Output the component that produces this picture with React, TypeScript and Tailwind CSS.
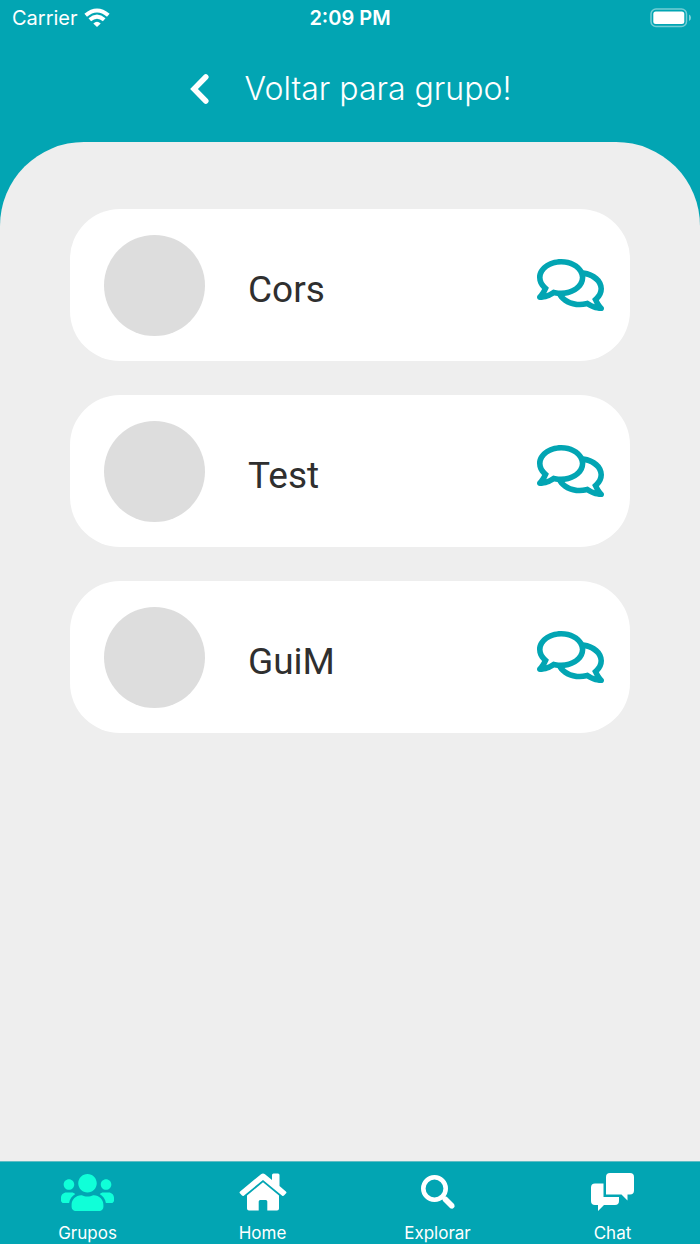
import { FaRegComments, FaUsers } from 'react-icons/fa'

interface Member {
  id: number
  name: string
}

const MEMBERS: Member[] = [
  { id: 1, name: 'Cors' },
  { id: 2, name: 'Test' },
  { id: 3, name: 'GuiM' },
]

const TABS = [
  { label: 'Grupos', icon: <FaUsers className="h-[43px] w-[53px]" />, active: true },
  { label: 'Home', icon: <HomeIcon />, active: false },
  { label: 'Explorar', icon: <SearchIcon />, active: false },
  { label: 'Chat', icon: <ChatIcon />, active: false },
]

function HomeIcon() {
  return (
    <svg viewBox="0 0 48 38" className="h-[38px] w-12" fill="currentColor" aria-hidden="true">
      <path d="M22 1.200Q24-.4 26 1.200L33 7V2Q33 .5 34.500 .5H39Q40.500 .5 40.500 2V13L46.900 18.400Q47.900 19.300 47.100 20.200L45 22.600Q44.100 23.400 43.200 22.700L24 7 4.800 22.700Q3.900 23.400 3 22.600L.9 20.200Q.1 19.300 1.100 18.400Z" />
      <path d="M24 9.300 40 22.400V35.500Q40 37.500 38 37.500H28.300V28.500Q28.300 27 26.800 27H21.200Q19.700 27 19.700 28.500V37.500H10Q8 37.500 8 35.500V22.400Z" />
    </svg>
  )
}

function SearchIcon() {
  return (
    <svg viewBox="0 0 34 34" className="h-[34px] w-[34px]" fill="none" stroke="currentColor" aria-hidden="true">
      <circle cx="13.500" cy="13.500" r="11.200" strokeWidth="4.600" />
      <path d="M20.500 20.500 25 25" strokeWidth="4.500" />
      <path d="M23.500 23.500 31.500 31.500" strokeWidth="5.500" />
      <path d="M24.500 24.500 31 31" strokeWidth="5" strokeLinecap="round" />
    </svg>
  )
}

function ChatIcon() {
  return (
    <svg viewBox="0 0 43 38" className="h-[38px] w-[43px]" fill="currentColor" aria-hidden="true">
      <path d="M19 0H39Q43 0 43 4V17.500Q43 21.500 39 21.500H36.500V27.500L30.500 21.500H15V4Q15 0 19 0Z" />
      <path d="M4 10.500H12.500V24H28V28Q28 32 24 32H13L7 38V32H4Q0 32 0 28V14.500Q0 10.500 4 10.500Z" />
    </svg>
  )
}

function WifiIcon() {
  return (
    <svg viewBox="0 0 26 20" className="h-5 w-[26px]" fill="none" stroke="currentColor" strokeWidth="4" role="img" aria-label="Wi-Fi">
      <path d="M1.700 7.300Q13-2.300 24.300 7.300" />
      <path d="M5.800 11.700Q13 5.600 20.200 11.700" />
      <path d="M13 19 9.300 15.400Q13 12.100 16.700 15.400Z" fill="currentColor" stroke="none" />
    </svg>
  )
}

function BatteryIcon() {
  return (
    <svg viewBox="0 0 42 20" className="h-5 w-[42px]" role="img" aria-label="Battery full">
      <rect x="1" y="1" width="35.500" height="17.500" rx="5" fill="none" stroke="white" strokeOpacity=".45" strokeWidth="1.500" />
      <rect x="3.300" y="3.500" width="31" height="12.500" rx="2.500" fill="white" />
      <path d="M39 6.500Q41 7.500 41 9.700T39 13Z" fill="white" fillOpacity=".5" />
    </svg>
  )
}

function StatusBar() {
  return (
    <div className="grid h-9 grid-cols-3 items-center px-2 text-xl">
      <div className="flex items-center gap-1.5 pl-1">
        <span>Carrier</span>
        <WifiIcon />
      </div>
      <span className="text-center font-semibold">2:09 PM</span>
      <div className="flex justify-end">
        <BatteryIcon />
      </div>
    </div>
  )
}

function MemberCard({ name }: { name: string }) {
  return (
    <li className="flex h-[152px] items-center rounded-[50px] bg-white pl-[34px] pr-[26px]">
      <div className="h-[101px] w-[101px] shrink-0 rounded-full bg-[#dddddd]" />
      <p className="ml-[43px] flex-1 pt-2.5 font-[Roboto,sans-serif] text-[37px] text-[#2f2f2f]">{name}</p>
      <button type="button" aria-label={`Chat com ${name}`} className="text-[#02a5b3]">
        <FaRegComments className="h-[60px] w-[67px]" />
      </button>
    </li>
  )
}

export default function App() {
  return (
    <div className="flex min-h-screen flex-col bg-[#02a5b3] font-[Inter,sans-serif] text-white">
      <StatusBar />

      <header className="flex h-[106px] items-center justify-center">
        <button type="button" className="flex items-center gap-9">
          <svg viewBox="0 0 20 30" className="h-[30px] w-5" fill="none" stroke="currentColor" strokeWidth="5.500" strokeLinejoin="miter" aria-hidden="true">
            <path d="M16.800 3 5 15 16.800 27" strokeLinecap="round" />
          </svg>
          <span className="text-[32px] font-light">Voltar para grupo!</span>
        </button>
      </header>

      <main className="flex-1 rounded-t-[84px] bg-[#eeeeee] px-[10%] pt-[67px]">
        <ul className="flex flex-col gap-[34px]">
          {MEMBERS.map((member) => (
            <MemberCard key={member.id} name={member.name} />
          ))}
        </ul>
      </main>

      <nav className="grid h-[83px] grid-cols-4 border-t border-[#60bcc4]">
        {TABS.map((tab) => (
          <button key={tab.label} type="button" className="flex flex-col items-center">
            <span className={`flex h-[60px] items-center ${tab.active ? 'text-[#10ffd8]' : ''}`}>{tab.icon}</span>
            <span className="text-[17px] leading-[22px]">{tab.label}</span>
          </button>
        ))}
      </nav>
    </div>
  )
}
